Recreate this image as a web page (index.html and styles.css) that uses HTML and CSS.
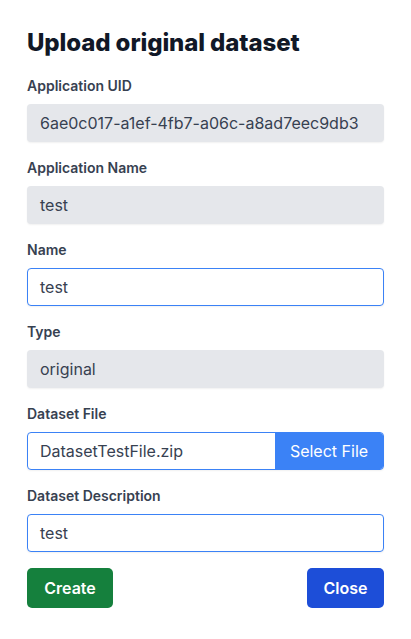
FILE: index.html
```html
<!DOCTYPE html>
<html>
<head>
<meta charset="utf-8">
<link rel="stylesheet" href="styles.css">
</head>
<body>
<div class="modal">
  <h1 class="title">Upload original dataset</h1>
  <div class="field">
    <label class="label">Application UID</label>
    <div class="input readonly">6ae0c017-a1ef-4fb7-a06c-a8ad7eec9db3</div>
  </div>
  <div class="field">
    <label class="label">Application Name</label>
    <div class="input readonly">test</div>
  </div>
  <div class="field">
    <label class="label">Name</label>
    <div class="input active">test</div>
  </div>
  <div class="field">
    <label class="label">Type</label>
    <div class="input readonly">original</div>
  </div>
  <div class="field">
    <label class="label">Dataset File</label>
    <div class="file">
      <div class="file-name">DatasetTestFile.zip</div>
      <div class="file-btn">Select File</div>
    </div>
  </div>
  <div class="field">
    <label class="label">Dataset Description</label>
    <div class="input active">test</div>
  </div>
  <div class="actions">
    <button class="btn create">Create</button>
    <button class="btn close">Close</button>
  </div>
</div>
</body>
</html>
```

FILE: styles.css
```css
* { box-sizing: border-box; }
html, body { margin: 0; padding: 0; background: #ffffff; }
body { font-family: Inter, "Noto Sans", sans-serif; color: #374151; }
.modal { padding: 27px 27px 24px; display: flex; flex-direction: column; }
.title { margin: 0 0 17px; font-size: 24px; line-height: 32px; font-weight: 800; color: #111827; letter-spacing: -0.1px; }
.field { display: flex; flex-direction: column; margin-bottom: 16px; }
.label { font-size: 14px; line-height: 20px; font-weight: 600; color: #374151; margin-bottom: 8px; }
.input { height: 38px; border-radius: 4px; padding: 0 13px; font-size: 16px; line-height: 38px; color: #374151; box-shadow: 0 1px 2px rgba(0,0,0,0.06); white-space: nowrap; overflow: hidden; }
.readonly { background: #e5e7eb; }
.active { background: #fff; border: 1px solid #3b82f6; line-height: 36px; padding: 0 12px; }
.file { display: flex; height: 38px; border: 1px solid #3b82f6; border-radius: 4px; overflow: hidden; box-shadow: 0 1px 2px rgba(0,0,0,0.06); }
.file-name { flex: 1; padding: 0 12px; font-size: 16px; line-height: 36px; color: #374151; }
.file-btn { background: #3b82f6; color: #fff; font-size: 16px; line-height: 36px; width: 108px; text-align: center; }
.actions { display: flex; justify-content: space-between; }
.btn { height: 40px; border: none; border-radius: 5px; padding: 0 16px; font-family: inherit; font-size: 16px; font-weight: 600; color: #fff; }
.create { background: #15803d; width: 86px; }
.close { background: #1d4ed8; width: 77px; }
```
